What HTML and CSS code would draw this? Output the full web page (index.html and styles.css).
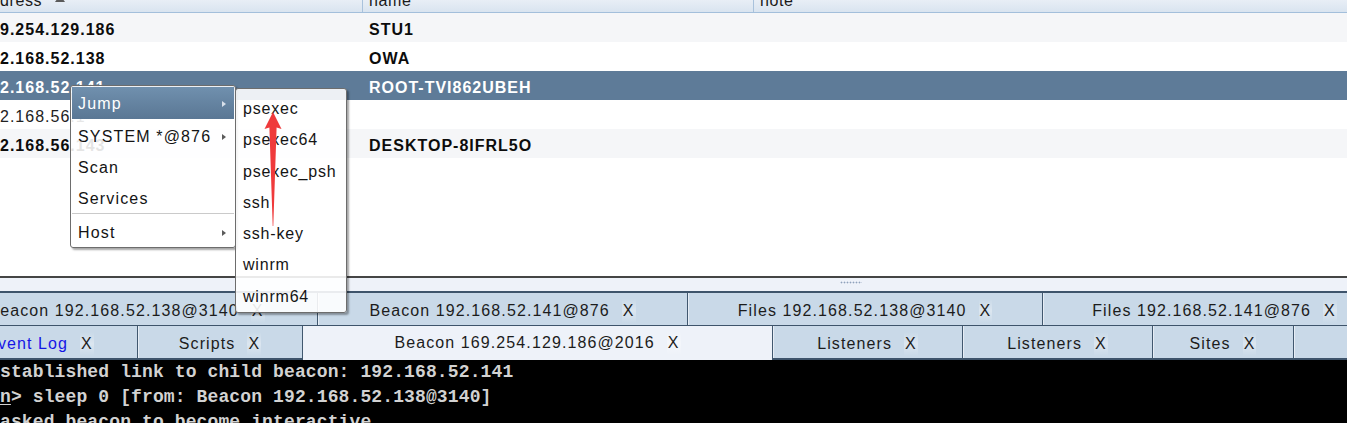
FILE: index.html
```html
<!DOCTYPE html>
<html>
<head>
<meta charset="utf-8">
<link rel="stylesheet" href="styles.css">
</head>
<body>
<div class="app">
  <section class="table">
    <div class="thead">
      <div class="th c1"><span>dress<i class="sort"></i></span></div>
      <div class="th c2"><span>name</span></div>
      <div class="th c3"><span>note</span></div>
    </div>
    <div class="row alt"><div class="td c1">9.254.129.186</div><div class="td c2">STU1</div><div class="td c3"></div></div>
    <div class="row"><div class="td c1">2.168.52.138</div><div class="td c2">OWA</div><div class="td c3"></div></div>
    <div class="row sel"><div class="td c1">2.168.52.141</div><div class="td c2">ROOT-TVI862UBEH</div><div class="td c3"></div></div>
    <div class="row"><div class="td c1 plain">2.168.56.1</div><div class="td c2"></div><div class="td c3"></div></div>
    <div class="row alt"><div class="td c1">2.168.56.143</div><div class="td c2">DESKTOP-8IFRL5O</div><div class="td c3"></div></div>
  </section>

  <div class="split"><span class="grip"></span></div>

  <section class="tabs">
    <div class="tabrow r1">
      <div class="tab w1a"><span>Beacon 192.168.52.138@3140</span><b class="x">X</b></div>
      <div class="tab w1b"><span>Beacon 192.168.52.141@876</span><b class="x">X</b></div>
      <div class="tab w1c"><span>Files 192.168.52.138@3140</span><b class="x">X</b></div>
      <div class="tab w1d"><span>Files 192.168.52.141@876</span><b class="x">X</b></div>
    </div>
    <div class="tabrow r2">
      <div class="tab w2a"><span class="blue">Event Log</span><b class="x">X</b></div>
      <div class="tab w2b"><span>Scripts</span><b class="x">X</b></div>
      <div class="tab w2c active"><span>Beacon 169.254.129.186@2016</span><b class="x">X</b></div>
      <div class="tab w2d"><span>Listeners</span><b class="x">X</b></div>
      <div class="tab w2d"><span>Listeners</span><b class="x">X</b></div>
      <div class="tab w2e"><span>Sites</span><b class="x">X</b></div>
      <div class="tab w2f"></div>
    </div>
  </section>

  <pre class="console">stablished link to child beacon: 192.168.52.141
<u>n</u>&gt; sleep 0 [from: Beacon 192.168.52.138@3140]
asked beacon to become interactive</pre>

  <div class="menu main">
    <div class="item hot">Jump<i class="arr"></i></div>
    <div class="item">SYSTEM *@876<i class="arr"></i></div>
    <div class="item">Scan</div>
    <div class="item">Services</div>
    <div class="sep"></div>
    <div class="item last">Host<i class="arr"></i></div>
  </div>

  <div class="menu sub">
    <div class="sitem">psexec</div>
    <div class="sitem">psexec64</div>
    <div class="sitem">psexec_psh</div>
    <div class="sitem">ssh</div>
    <div class="sitem">ssh-key</div>
    <div class="sitem">winrm</div>
    <div class="sitem">winrm64</div>
  </div>

  <svg class="pointer" width="24" height="124" viewBox="0 0 24 124">
    <path d="M11 4 L19.5 21 L14.6 19.5 L11.3 118 L10.7 118 L7.4 19.5 L2.5 21 Z" fill="#ef3a3b"/>
  </svg>
</div>
</body>
</html>
```

FILE: styles.css
```css
html, body {
  margin: 0;
  padding: 0;
}
body {
  width: 1347px;
  height: 423px;
  overflow: hidden;
  background: #ffffff;
  font-family: "Liberation Sans", Arial, sans-serif;
  color: #111;
}
.app {
  position: relative;
  width: 1347px;
  height: 423px;
  overflow: hidden;
}

/* ---------- table ---------- */
.table {
  height: 276px;
  background: #fff;
  overflow: hidden;
}
.thead {
  display: flex;
  height: 12px;
  border-bottom: 1px solid #a3bfdb;
  background: linear-gradient(#e8eef6, #d9e4f0);
  font-size: 16px;
  letter-spacing: 0.6px;
  color: #1a1a1a;
}
.th {
  box-sizing: border-box;
  overflow: hidden;
  white-space: nowrap;
}
.th span {
  display: block;
  line-height: 16px;
  margin-top: -7px;
}
.thead .c1 { border-right: 1px solid #a9c2dc; }
.thead .c2 { border-right: 1px solid #a9c2dc; }
.c1 { width: 363px; flex: none; box-sizing: border-box; }
.c2 { width: 391px; flex: none; box-sizing: border-box; padding-left: 6px; }
.c3 { flex: 1; padding-left: 6px; }
.sort {
  display: inline-block;
  width: 0;
  height: 0;
  margin-left: 13px;
  border-left: 5px solid transparent;
  border-right: 5px solid transparent;
  border-bottom: 7px solid #5a5a5a;
  vertical-align: 4px;
}
.row {
  display: flex;
  height: 29px;
  font-size: 16px;
  font-weight: bold;
  letter-spacing: 1px;
  color: #0c0c0c;
}
.row.alt { background: #f5f6f8; }
.row.sel { background: #5e7b98; color: #ffffff; }
.td {
  padding-top: 5px;
  line-height: 24px;
  white-space: nowrap;
  overflow: hidden;
}
.td.plain { font-weight: normal; color: #222; }

/* ---------- splitter ---------- */
.split {
  height: 13px;
  border-top: 2px solid #454545;
  background: #eef2f9;
  display: flex;
}
.grip {
  display: block;
  width: 22px;
  height: 3px;
  margin: 3px 0 0 840px;
  background-image: radial-gradient(circle, #8fa2bb 0.8px, transparent 1.1px);
  background-size: 3px 3px;
}

/* ---------- tabs ---------- */
.tabs {
  font-size: 16px;
  letter-spacing: 1.1px;
  color: #1c1c1c;
}
.tabrow {
  display: flex;
  white-space: nowrap;
}
.r1 {
  border-top: 2px solid #3e546b;
  border-bottom: 1px solid #3e546b;
  background: #c9d9e8;
}
.r2 {
  background: #c9d9e8;
}
.tab {
  flex: none;
  box-sizing: border-box;
  display: flex;
  align-items: center;
  justify-content: center;
  background: #c9d9e8;
  border-right: 1px solid #41586f;
  box-shadow: inset 1px 0 0 #e6edf5;
}
.r1 .tab {
  height: 32px;
  padding-top: 3px;
}
.r2 .tab {
  height: 34px;
  padding-top: 4px;
  border-bottom: 2px solid #3e546b;
}
.r2 .tab.active {
  background: #eef2f9;
  border-bottom: none;
  padding-top: 0;
  padding-bottom: 1px;
  box-shadow: none;
}
.x {
  font-weight: normal;
  margin-left: 12px;
  padding: 3px 1px;
  background: linear-gradient(rgba(255,255,255,0), rgba(255,255,255,0.35), rgba(255,255,255,0));
}
.blue { color: #1515e6; }
.w1a { width: 382px; margin-left: -64px; }
.w1b { width: 370px; }
.w1c { width: 355px; }
.w1d { width: 344px; }
.w2a { width: 195px; margin-left: -57px; }
.w2b { width: 165px; }
.w2c { width: 470px; }
.w2d { width: 190px; }
.w2e { width: 141px; }
.w2f { width: 200px; }

/* ---------- console ---------- */
.console {
  margin: 0;
  height: 63px;
  overflow: hidden;
  background: #000;
  color: #d2d2d2;
  font-family: "Liberation Mono", "Courier New", monospace;
  font-weight: bold;
  font-size: 18px;
  letter-spacing: 0.12px;
  line-height: 25px;
  white-space: pre;
}
.console u { text-underline-offset: 2px; }

/* ---------- popup menus ---------- */
.menu {
  position: absolute;
  box-sizing: border-box;
  border: 1px solid #6d6d6d;
  border-radius: 3px;
  background: rgba(255, 255, 255, 0.89);
  box-shadow: 2px 2px 2px rgba(0, 0, 0, 0.35);
  font-size: 16px;
  letter-spacing: 0.8px;
  color: #141414;
}
.main {
  left: 70px;
  top: 85px;
  width: 166px;
  height: 163px;
  padding: 1px;
  letter-spacing: 1.15px;
}
.item {
  display: flex;
  align-items: center;
  height: 31px;
  box-sizing: border-box;
  padding: 5px 8px 0 6px;
  line-height: 26px;
}
.item.last {
  padding-top: 4px;
  line-height: 27px;
}
.item.hot {
  height: 32px;
  padding-top: 2px;
  line-height: 30px;
  color: #ffffff;
  background: linear-gradient(#7090ae, #5a7794);
}
.arr {
  margin-left: auto;
  width: 0;
  height: 0;
  border-left: 4px solid #5b5b5b;
  border-top: 3px solid transparent;
  border-bottom: 3px solid transparent;
}
.hot .arr { border-left-color: #d8e0ea; }
.sep {
  height: 1px;
  margin: 1px 0 1px;
  background: #cacaca;
}
.sub {
  left: 235px;
  top: 88px;
  width: 112px;
  height: 225px;
  padding: 3px 1px 0;
}
.sitem {
  height: 31.25px;
  line-height: 31.25px;
  padding-left: 6px;
  padding-top: 1px;
  box-sizing: border-box;
  white-space: nowrap;
}

.pointer {
  position: absolute;
  left: 262px;
  top: 108px;
}
```
